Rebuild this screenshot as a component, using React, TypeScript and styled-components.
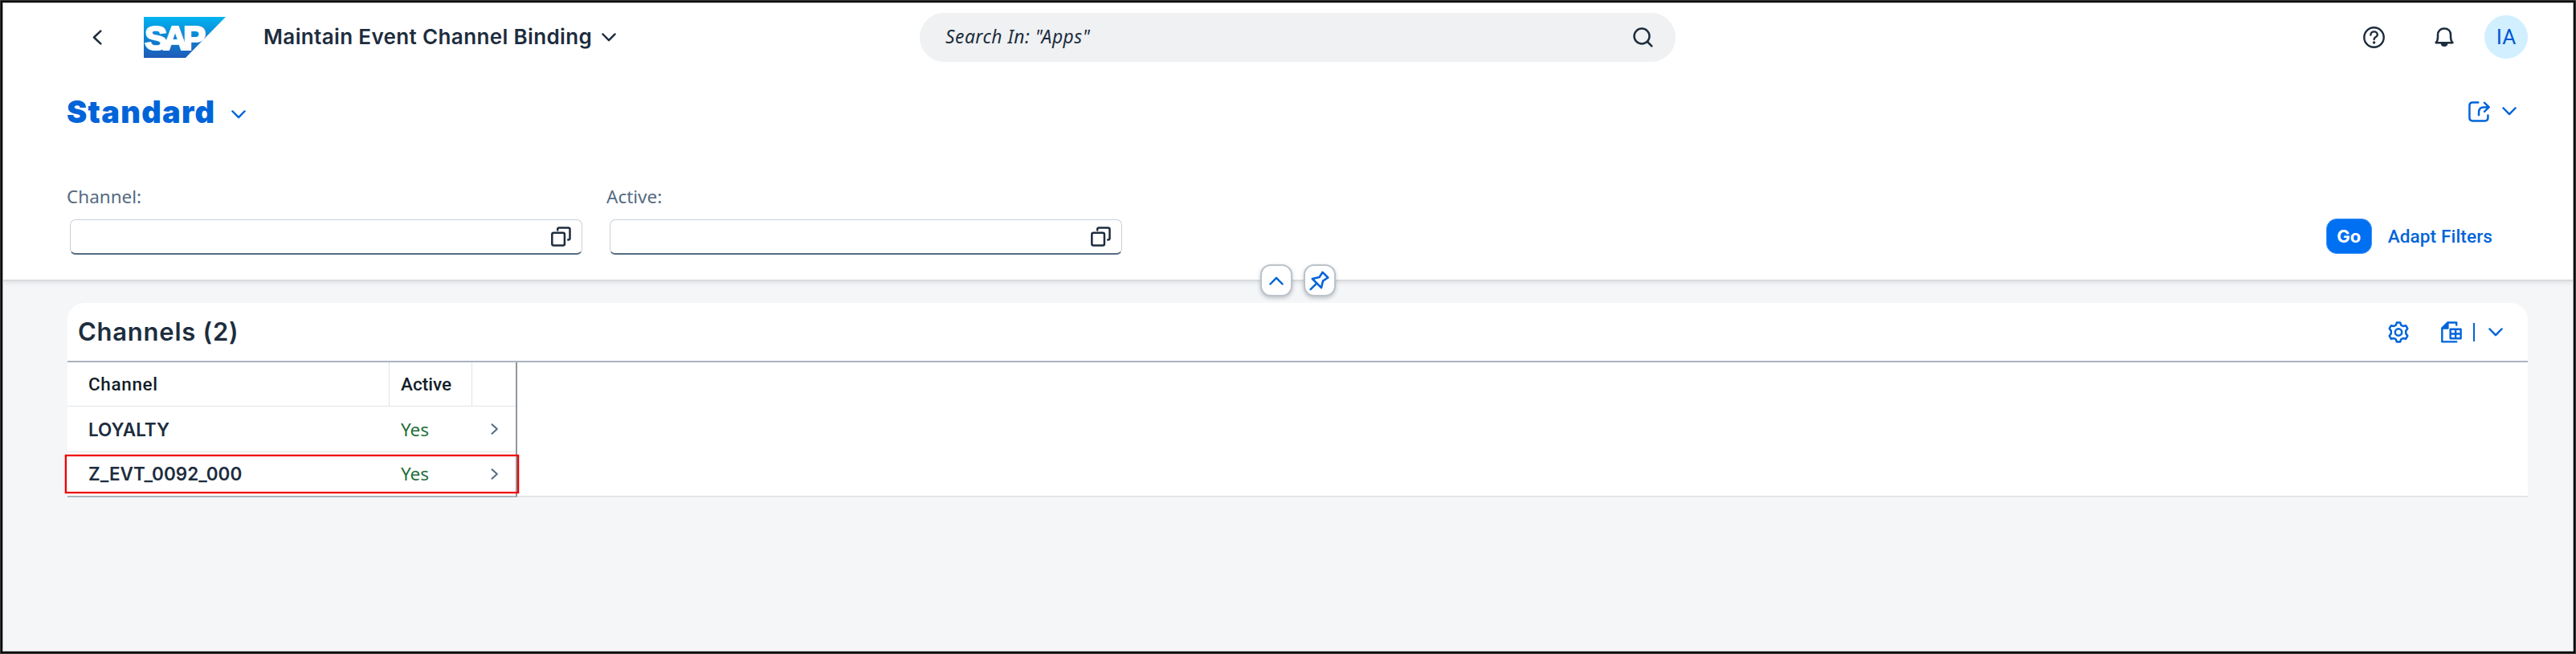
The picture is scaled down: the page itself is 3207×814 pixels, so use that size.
import React from "react";
import styled, { createGlobalStyle, css } from "styled-components";

const ink = "#1d2d3e";
const blue = "#0064d9";
const label = "#556b82";
const headingFont = `Inter, "Noto Sans", sans-serif`;
const controlFont = `Roboto, "Noto Sans", sans-serif`;

const GlobalStyle = createGlobalStyle`
  * { box-sizing: border-box; }
  body { margin: 0; background: #fff; font-family: "Noto Sans", "Open Sans", sans-serif; color: ${ink}; }
  button { font: inherit; color: inherit; background: none; border: 0; padding: 0; display: flex; align-items: center; justify-content: center; }
  svg { display: block; flex: none; }
`;

const OuterEdge = styled.div`
  width: 3207px;
  height: 814px;
  border: 1px solid #3c3c3c;
`;
const Frame = styled.div`
  height: 100%;
  border: 2px solid #000;
`;
const Page = styled.div`
  height: 100%;
  border: 1px solid #b4b4b4;
  background: #f5f6f7;
  display: flex;
  flex-direction: column;
`;

const HeaderPanel = styled.header`
  position: relative;
  height: 346px;
  background: #fff;
  border-bottom: 2px solid #d9dbdd;
  box-shadow: 0 2px 5px rgba(34, 53, 72, 0.1);
`;

const ShellBar = styled.div`
  display: flex;
  align-items: center;
  height: 84px;
`;
const ShellLeft = styled.div`
  display: flex;
  align-items: center;
  width: 1141px;
  padding-left: 111px;
`;
const LogoSlot = styled.div`
  margin-left: 52px;
`;
const AppTitleButton = styled.button`
  margin-left: 47px;
  gap: 12px;
`;
const AppTitle = styled.span`
  font-family: ${headingFont};
  font-size: 26px;
  line-height: 40px;
  font-weight: 600;
  letter-spacing: 0.36px;
  white-space: nowrap;
`;
const SearchField = styled.div`
  display: flex;
  align-items: center;
  justify-content: space-between;
  width: 941px;
  height: 61px;
  padding: 0 28px 0 32px;
  border-radius: 31px;
  background: #eff1f2;
`;
const SearchText = styled.span`
  font-size: 22.8px;
  line-height: 36px;
  font-style: italic;
  letter-spacing: 0.5px;
`;
const ShellActions = styled.div`
  display: flex;
  align-items: center;
  margin-left: auto;
  padding-right: 56px;
`;
const ActionIcon = styled.button<{ $after: number }>`
  margin-right: ${(p) => p.$after}px;
`;
const Avatar = styled.div`
  display: flex;
  align-items: center;
  justify-content: center;
  width: 54px;
  height: 54px;
  border-radius: 50%;
  background: #d1efff;
  color: #0057d2;
  font-family: ${controlFont};
  font-size: 26px;
  line-height: 40px;
`;

const VariantRow = styled.div`
  display: flex;
  align-items: center;
  justify-content: space-between;
  height: 101px;
  padding: 0 70px 0 79px;
  color: ${blue};
`;
const VariantButton = styled.button`
  gap: 20px;
`;
const VariantName = styled.span`
  font-family: ${headingFont};
  font-size: 38px;
  line-height: 56px;
  font-weight: 900;
  letter-spacing: 1.3px;
`;
const VariantArrow = styled.span`
  padding-top: 7px;
`;
const ShareButton = styled.button`
  gap: 15px;
`;

const FilterRow = styled.div`
  display: flex;
  align-items: flex-end;
  height: 128px;
  padding-left: 79px;
  padding-right: 100px;
`;
const FilterField = styled.div`
  width: 672px;
`;
const FilterLabel = styled.div`
  color: ${label};
  font-size: 22.5px;
  line-height: 32px;
  margin-bottom: 12px;
`;
const FilterInput = styled.div`
  display: flex;
  align-items: center;
  justify-content: flex-end;
  width: 638px;
  height: 44px;
  margin-left: 4px;
  padding-right: 13px;
  border: 1.5px solid #c9d0d8;
  border-bottom: 2px solid #556b82;
  border-radius: 7px;
  background: #fff;
`;
const FilterActions = styled.div`
  display: flex;
  align-items: center;
  gap: 20px;
  margin-left: auto;
  padding-bottom: 1px;
`;
const GoButton = styled.button`
  width: 57px;
  height: 44px;
  border-radius: 13px;
  border: 1px solid #3f92fa;
  background: #0070f2;
  color: #fff;
  font-family: ${headingFont};
  font-size: 22px;
  font-weight: 700;
`;
const LinkButton = styled.button`
  color: ${blue};
  font-family: ${controlFont};
  font-size: 22.5px;
  font-weight: 500;
  letter-spacing: 0.15px;
  white-space: nowrap;
`;

const HeaderToggles = styled.div`
  position: absolute;
  left: 0;
  right: 2px;
  bottom: -21px;
  display: flex;
  justify-content: center;
  gap: 14px;
  padding-left: 26px;
`;
const ToggleButton = styled.button`
  width: 40px;
  height: 40px;
  border: 2px solid #bcc3ca;
  border-radius: 13px;
  background: #fff;
  color: ${blue};
  box-shadow: 0 2px 5px rgba(34, 53, 72, 0.28);
`;

const TableCard = styled.section`
  width: 3063px;
  height: 242px;
  margin: 27px 0 0 80px;
  background: #fff;
  border-radius: 21px 21px 0 0;
  border-bottom: 2px solid #e3e5e7;
`;
const TableToolbar = styled.div`
  display: flex;
  align-items: center;
  height: 74px;
  padding: 0 31px 0 13px;
  border-bottom: 2px solid #a9b4be;
`;
const TableTitle = styled.h2`
  margin: 0;
  font-family: ${headingFont};
  font-size: 31px;
  line-height: 44px;
  font-weight: 600;
  letter-spacing: 0.75px;
`;
const ToolbarActions = styled.div`
  display: flex;
  align-items: center;
  margin-left: auto;
  color: ${blue};
`;
const Separator = styled.span`
  width: 2px;
  height: 23px;
  margin: 0 17px 0 14px;
  background: ${blue};
`;

const Table = styled.div`
  position: relative;
  width: 560px;
  height: 168px;
  border-right: 2px solid #8f969d;
  border-bottom: 2px solid #a9b4be;
`;
const Row = styled.div<{ $height: number; $last?: boolean }>`
  display: grid;
  grid-template-columns: 401px 103px 1fr;
  height: ${(p) => p.$height}px;
  ${(p) => !p.$last && css`border-bottom: 1.5px solid #e2e4e6;`}
`;
const Cell = styled.div<{ $inset: number; $divider?: boolean }>`
  display: flex;
  align-items: center;
  padding-left: ${(p) => p.$inset}px;
  font-size: 22.5px;
  white-space: nowrap;
  ${(p) => p.$divider && css`border-right: 1.5px solid #e2e4e6;`}
`;
const ColumnName = styled.span<{ $tracking?: number }>`
  font-family: ${controlFont};
  font-weight: 500;
  color: #131e29;
  letter-spacing: ${(p) => p.$tracking ?? 0}px;
`;
const ChannelName = styled.span`
  font-family: ${headingFont};
  font-weight: 600;
`;
const Status = styled.span`
  color: #256f3a;
`;
const Highlight = styled.div`
  position: absolute;
  left: -3px;
  top: 115px;
  width: 565px;
  height: 48px;
  border: 2.5px solid #f00000;
  box-shadow: 0 0 0 0.5px rgba(240, 0, 0, 0.5);
`;

type ChevronProps = { w: number; h: number; d: string; color?: string; stroke?: number };
const Chevron = ({ w, h, d, color = "currentColor", stroke = 2.5 }: ChevronProps) => (
  <svg width={w} height={h} viewBox={`0 0 ${w} ${h}`} fill="none" stroke={color} strokeWidth={stroke} strokeLinecap="round" strokeLinejoin="round">
    <path d={d} />
  </svg>
);
const Down = ({ color }: { color?: string }) => <Chevron w={18} h={11} d="M1.5 1.5 9 9.2 16.5 1.5" color={color} />;
const RowArrow = () => <Chevron w={10} h={14} d="M1.5 1.2 7.8 7 1.5 12.8" color={label} stroke={2} />;

const SapLogo = () => (
  <svg width="102" height="51" viewBox="0 0 102 51">
    <defs>
      <linearGradient id="sap" x1="0" y1="0" x2="0" y2="1">
        <stop offset="0" stopColor="#00b4f1" />
        <stop offset="0.5" stopColor="#0d83d2" />
        <stop offset="1" stopColor="#1f5bb8" />
      </linearGradient>
    </defs>
    <path d="M0 0H102L52 51H0Z" fill="url(#sap)" />
    <text x="1" y="40.5" fill="#fff" stroke="#fff" strokeWidth="2.2" fontFamily="Liberation Sans, Arial, sans-serif" fontWeight="700" fontSize="42" textLength="76" lengthAdjust="spacing">SAP</text>
  </svg>
);
const SearchIcon = () => (
  <svg width="25" height="25" viewBox="0 0 25 25" fill="none" stroke={ink} strokeWidth="2.5" strokeLinecap="round">
    <circle cx="11" cy="11" r="9.5" />
    <path d="M18 18 23.3 23.3" />
  </svg>
);
const HelpIcon = () => (
  <svg width="27" height="27" viewBox="0 0 27 27" fill="none" stroke={ink} strokeWidth="2.4" strokeLinecap="round" strokeLinejoin="round">
    <circle cx="13.5" cy="13.5" r="12.2" />
    <path d="M9.4 10.5C9.4 4.9 17.8 5.1 17.8 10.3C17.8 13.2 13.6 12.8 13.6 16" />
    <circle cx="13.6" cy="20" r="1.7" fill={ink} stroke="none" />
  </svg>
);
const BellIcon = () => (
  <svg width="24" height="25" viewBox="0 0 24 25" fill="none" stroke={ink} strokeWidth="2.5" strokeLinejoin="round">
    <path d="M1.6 19.2C3.6 17.2 4 15.6 4 12V9.3C4 4.4 7.2 1.5 12 1.5S20 4.4 20 9.3V12C20 15.6 20.4 17.2 22.4 19.2Z" />
    <path d="M7.5 20H16.5C16 23 14.3 24 12 24S8 23 7.5 20Z" fill={ink} stroke="none" />
  </svg>
);
const ShareIcon = () => (
  <svg width="27" height="26" viewBox="0 0 27 26" fill="none" stroke="currentColor" strokeWidth="2.5" strokeLinecap="round" strokeLinejoin="round">
    <path d="M12.3 1.5H5.3C2.8 1.5 1.4 2.8 1.4 5.3V20.6C1.4 23.1 2.8 24.4 5.3 24.4H20.6C23.1 24.4 24.4 23.1 24.4 20.6V17.6" />
    <path d="M13 17.3V14C13 9.8 15.2 7.4 19.2 7.4H25.3M20 1.8 25.7 7.4 20 12.8" />
  </svg>
);
const ValueHelpIcon = () => (
  <svg width="25" height="25" viewBox="0 0 25 25" fill="none" stroke={ink} strokeWidth="2.5" strokeLinecap="round" strokeLinejoin="round">
    <rect x="1.3" y="7.8" width="15.6" height="15.6" rx="2" />
    <path d="M8.2 4.6V3.4C8.2 2.1 8.9 1.4 10.2 1.4H21.4C22.7 1.4 23.5 2.1 23.5 3.4V14.6C23.5 15.9 22.7 16.6 21.2 16.6" />
  </svg>
);
const PinIcon = () => (
  <svg width="25" height="25" viewBox="0 0 25 25" fill="none" stroke="currentColor" strokeWidth="2.5" strokeLinecap="round" strokeLinejoin="round">
    <path d="M16.6 1.8 23.3 8.5 17 12.6 15 21.2 3.8 10 12.6 8 16.6 1.8Z" />
    <path d="M9.3 15.7 1.6 23.2" />
  </svg>
);
const GearIcon = () => (
  <svg width="26" height="27" viewBox="0 0 26 27" fill="none" stroke="currentColor" strokeWidth="2.5" strokeLinejoin="round">
    <path d="M10.9 1.4H15.1L16.3 4.7 18.7 6 22.1 5.2 24.3 8.9 22.2 11.8V15.2L24.3 18.1 22.1 21.8 18.7 21 16.3 22.3 15.1 25.6H10.9L9.7 22.3 7.3 21 3.9 21.8 1.7 18.1 3.8 15.2V11.8L1.7 8.9 3.9 5.2 7.3 6 9.7 4.7Z" />
    <circle cx="13" cy="13.5" r="4.2" />
  </svg>
);
const ExportIcon = () => (
  <svg width="26" height="27" viewBox="0 0 26 27" fill="none" stroke="currentColor" strokeWidth="2.4" strokeLinecap="round" strokeLinejoin="round">
    <path d="M19.2 4.6V1.5H8.4L1.3 8.6V25.4H19.2" />
    <path d="M1.3 8.6 8.4 1.5V8.6Z" fill="currentColor" />
    <path d="M11.6 9.8H24.6V21.2H11.6ZM18.1 9.8V21.2M11.6 15.5H24.6" />
  </svg>
);

const rows = [
  { name: "LOYALTY", height: 57 },
  { name: "Z_EVT_0092_000", height: 53 },
];

export default function App() {
  return (
    <>
      <GlobalStyle />
      <OuterEdge>
        <Frame>
          <Page>
            <HeaderPanel>
              <ShellBar>
                <ShellLeft>
                  <Chevron w={12} h={19} d="M10.3 1.6 2 9.5 10.3 17.4" color={ink} />
                  <LogoSlot><SapLogo /></LogoSlot>
                  <AppTitleButton>
                    <AppTitle>Maintain Event Channel Binding</AppTitle>
                    <Down color={ink} />
                  </AppTitleButton>
                </ShellLeft>
                <SearchField>
                  <SearchText>Search In: "Apps"</SearchText>
                  <SearchIcon />
                </SearchField>
                <ShellActions>
                  <ActionIcon $after={62}><HelpIcon /></ActionIcon>
                  <ActionIcon $after={38}><BellIcon /></ActionIcon>
                  <Avatar>IA</Avatar>
                </ShellActions>
              </ShellBar>
              <VariantRow>
                <VariantButton>
                  <VariantName>Standard</VariantName>
                  <VariantArrow><Down /></VariantArrow>
                </VariantButton>
                <ShareButton>
                  <ShareIcon />
                  <Down />
                </ShareButton>
              </VariantRow>
              <FilterRow>
                {["Channel:", "Active:"].map((name) => (
                  <FilterField key={name}>
                    <FilterLabel>{name}</FilterLabel>
                    <FilterInput><ValueHelpIcon /></FilterInput>
                  </FilterField>
                ))}
                <FilterActions>
                  <GoButton>Go</GoButton>
                  <LinkButton>Adapt Filters</LinkButton>
                </FilterActions>
              </FilterRow>
              <HeaderToggles>
                <ToggleButton><Chevron w={18} h={11} d="M1.5 9.5 9 1.8 16.5 9.5" /></ToggleButton>
                <ToggleButton><PinIcon /></ToggleButton>
              </HeaderToggles>
            </HeaderPanel>

            <TableCard>
              <TableToolbar>
                <TableTitle>Channels (2)</TableTitle>
                <ToolbarActions>
                  <ActionIcon $after={40}><GearIcon /></ActionIcon>
                  <ExportIcon />
                  <Separator />
                  <Down />
                </ToolbarActions>
              </TableToolbar>
              <Table>
                <Row $height={55}>
                  <Cell $inset={26} $divider><ColumnName $tracking={0.65}>Channel</ColumnName></Cell>
                  <Cell $inset={14} $divider><ColumnName>Active</ColumnName></Cell>
                  <Cell $inset={0} />
                </Row>
                {rows.map((row, i) => (
                  <Row key={row.name} $height={row.height} $last={i === rows.length - 1}>
                    <Cell $inset={26}><ChannelName>{row.name}</ChannelName></Cell>
                    <Cell $inset={14}><Status>Yes</Status></Cell>
                    <Cell $inset={23}><RowArrow /></Cell>
                  </Row>
                ))}
                <Highlight />
              </Table>
            </TableCard>
          </Page>
        </Frame>
      </OuterEdge>
    </>
  );
}
